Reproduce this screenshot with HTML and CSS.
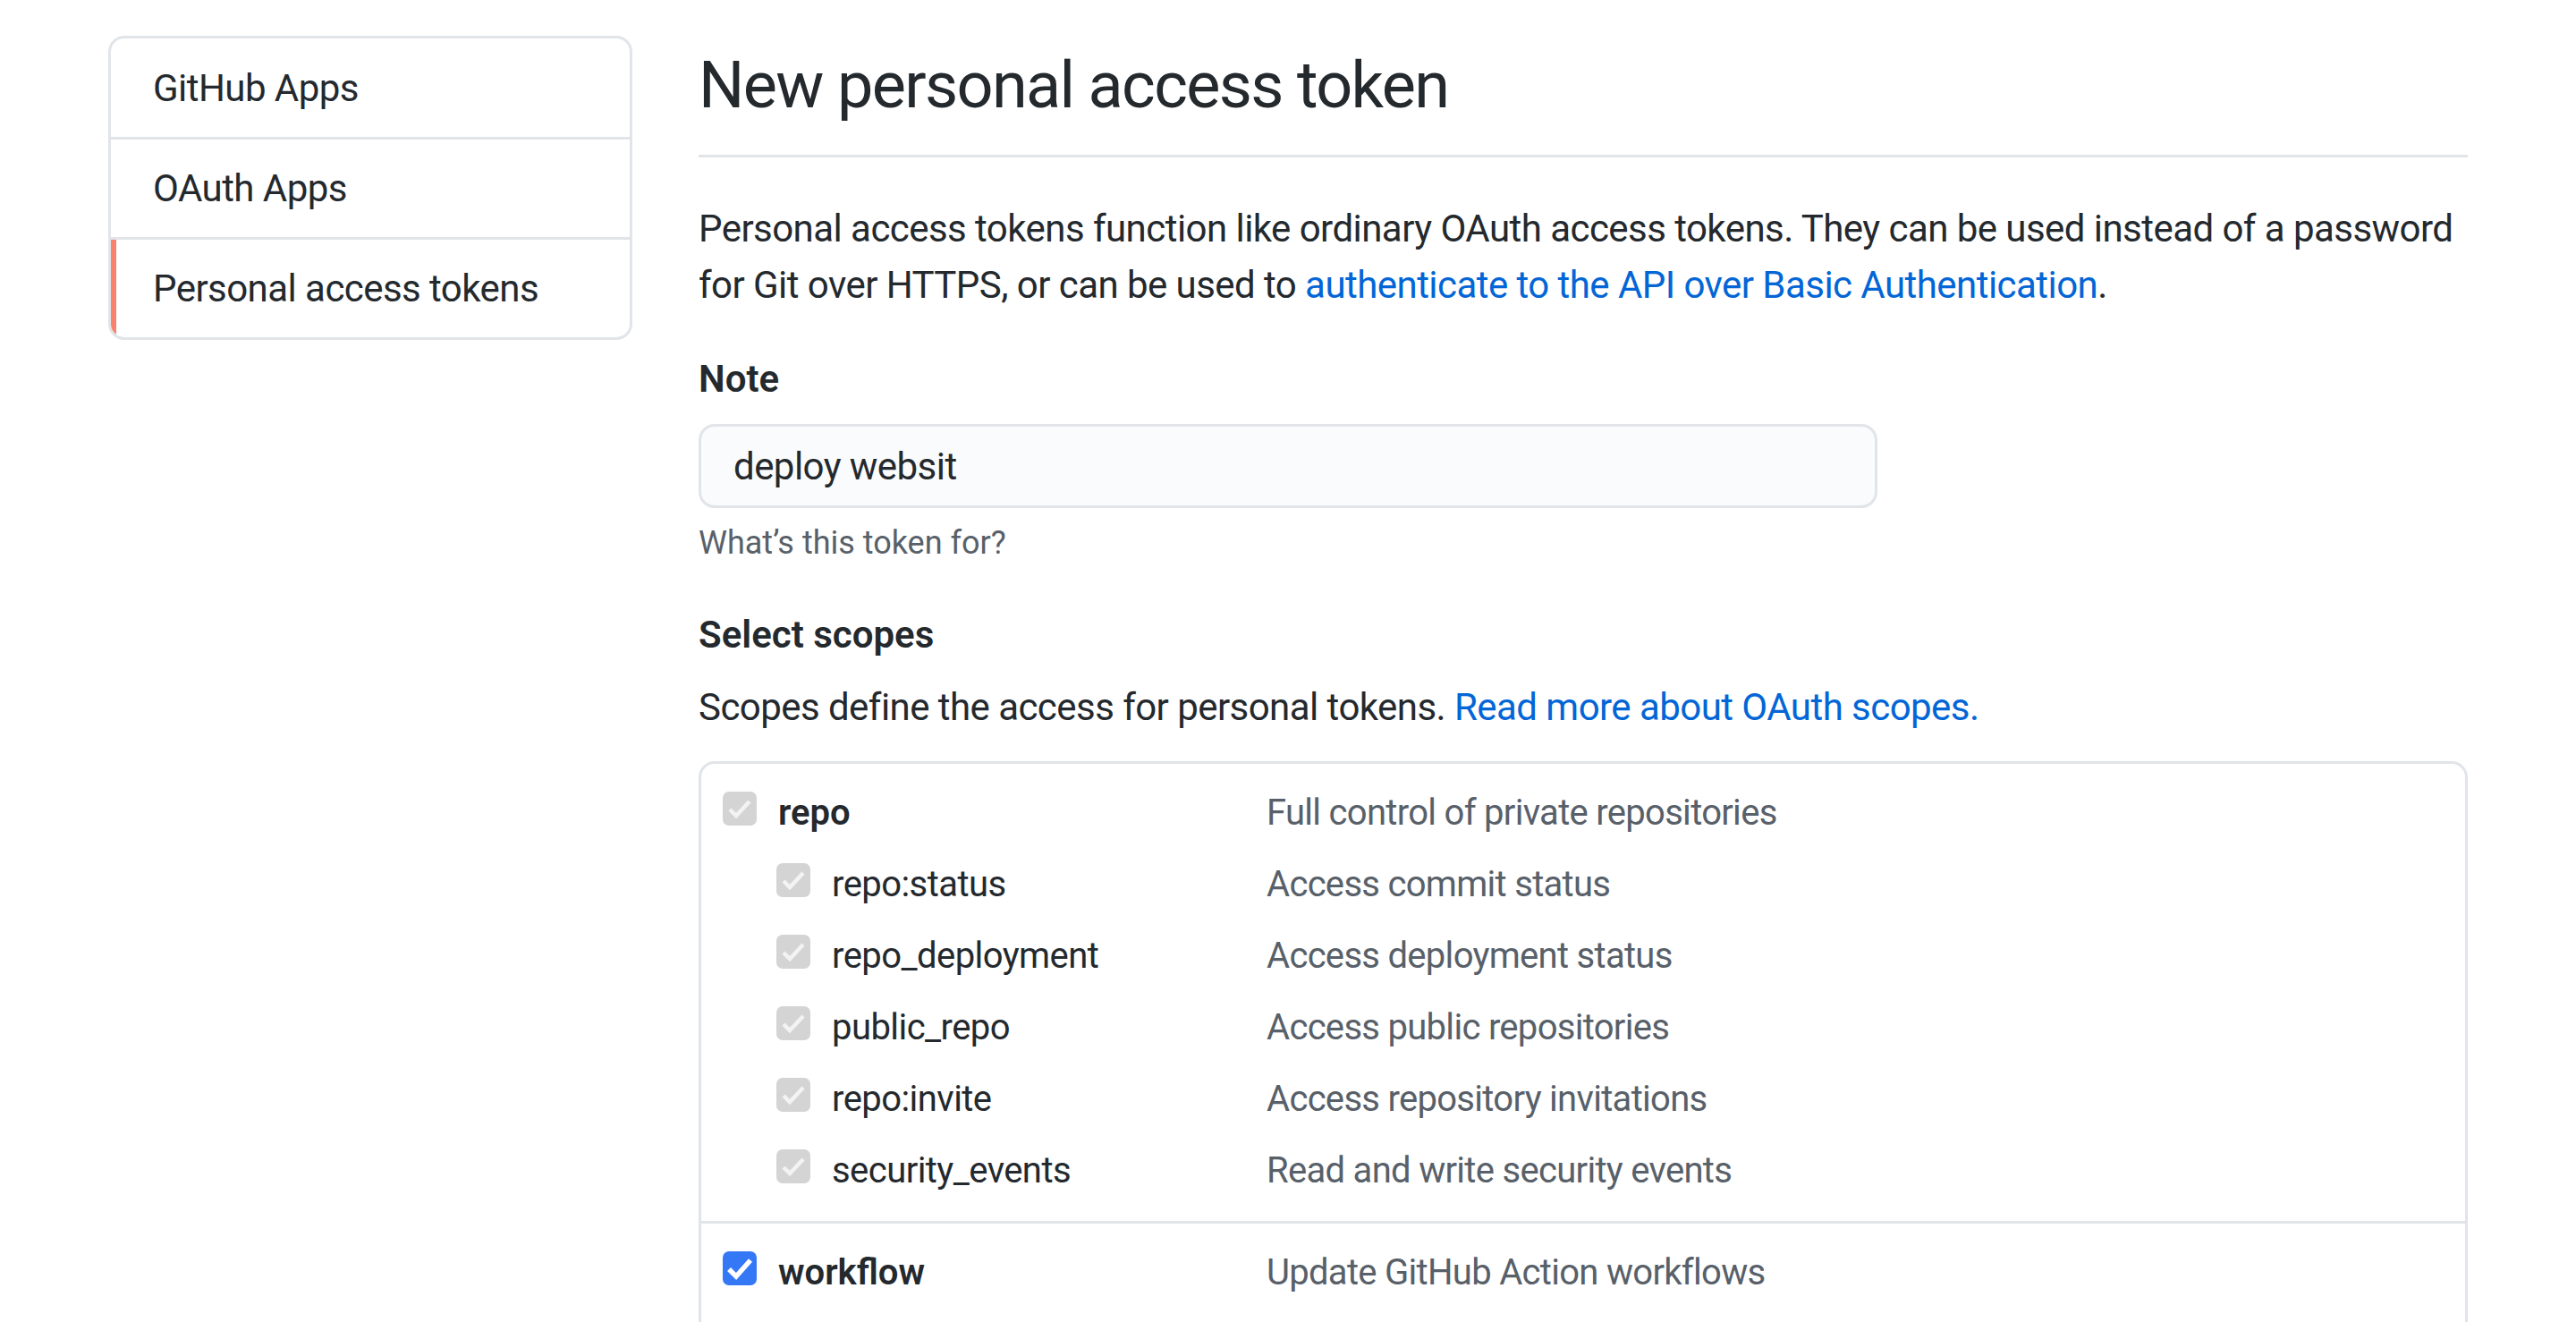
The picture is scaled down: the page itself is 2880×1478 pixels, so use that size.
FILE: index.html
```html
<!DOCTYPE html>
<html lang="en">
<head>
<meta charset="utf-8">
<title>New personal access token</title>
<link rel="stylesheet" href="styles.css">
</head>
<body>
<div class="layout">
  <nav class="menu">
    <a class="menu-item">GitHub Apps</a>
    <a class="menu-item">OAuth Apps</a>
    <a class="menu-item selected">Personal access tokens</a>
  </nav>
  <main class="main">
    <div class="subhead">
      <h2 class="subhead-heading">New personal access token</h2>
    </div>
    <p class="intro">Personal access tokens function like ordinary OAuth access tokens. They can be used instead of a password<br>for Git over HTTPS, or can be used to <a class="link">authenticate to the API over Basic Authentication</a>.</p>
    <div class="form-group">
      <label class="form-label">Note</label>
      <input class="form-control" type="text" value="deploy websit">
      <p class="note">What’s this token for?</p>
    </div>
    <div class="scopes-head">
      <div class="form-label">Select scopes</div>
      <p class="scopes-desc">Scopes define the access for personal tokens. <a class="link">Read more about OAuth scopes.</a></p>
    </div>
    <div class="scopes">
      <div class="scope-group">
        <div class="scope-row">
          <div class="scope-name top"><span class="check disabled"><svg viewBox="0 0 38 38"><path d="M8 20 L15 27 L30 11"/></svg></span><span class="name strong">repo</span></div>
          <div class="scope-desc">Full control of private repositories</div>
        </div>
        <div class="scope-row">
          <div class="scope-name sub"><span class="check disabled"><svg viewBox="0 0 38 38"><path d="M8 20 L15 27 L30 11"/></svg></span><span class="name">repo:status</span></div>
          <div class="scope-desc">Access commit status</div>
        </div>
        <div class="scope-row">
          <div class="scope-name sub"><span class="check disabled"><svg viewBox="0 0 38 38"><path d="M8 20 L15 27 L30 11"/></svg></span><span class="name">repo_deployment</span></div>
          <div class="scope-desc">Access deployment status</div>
        </div>
        <div class="scope-row">
          <div class="scope-name sub"><span class="check disabled"><svg viewBox="0 0 38 38"><path d="M8 20 L15 27 L30 11"/></svg></span><span class="name">public_repo</span></div>
          <div class="scope-desc">Access public repositories</div>
        </div>
        <div class="scope-row">
          <div class="scope-name sub"><span class="check disabled"><svg viewBox="0 0 38 38"><path d="M8 20 L15 27 L30 11"/></svg></span><span class="name">repo:invite</span></div>
          <div class="scope-desc">Access repository invitations</div>
        </div>
        <div class="scope-row">
          <div class="scope-name sub"><span class="check disabled"><svg viewBox="0 0 38 38"><path d="M8 20 L15 27 L30 11"/></svg></span><span class="name">security_events</span></div>
          <div class="scope-desc">Read and write security events</div>
        </div>
      </div>
      <div class="scope-group">
        <div class="scope-row">
          <div class="scope-name top"><span class="check checked"><svg viewBox="0 0 38 38"><path d="M7 20 L15 28 L31 10"/></svg></span><span class="name strong">workflow</span></div>
          <div class="scope-desc">Update GitHub Action workflows</div>
        </div>
      </div>
      <div class="scope-group">
        <div class="scope-row">
          <div class="scope-name top"><span class="check"></span><span class="name strong">write:packages</span></div>
          <div class="scope-desc">Upload packages to GitHub Package Registry</div>
        </div>
      </div>
    </div>
  </main>
</div>
</body>
</html>
```
FILE: styles.css
```css
html, body {
  margin: 0;
  padding: 0;
  background: #ffffff;
}
body {
  font-family: Roboto, "Liberation Sans", sans-serif;
  font-size: 42px;
  line-height: 63px;
  color: #24292e;
  letter-spacing: -0.55px;
}
.layout {
  display: flex;
  gap: 74px;
  padding: 40px 121px 0 121px;
}
.menu {
  width: 586px;
  flex: none;
  box-sizing: border-box;
  border: 3px solid #e1e4e8;
  border-radius: 18px;
  overflow: hidden;
  align-self: flex-start;
  display: flex;
  flex-direction: column;
}
.menu-item {
  display: flex;
  align-items: center;
  height: 109px;
  padding-left: 47px;
  border-top: 3px solid #e1e4e8;
  color: #24292e;
}
.menu-item:first-child {
  border-top: 0;
  height: 110px;
}
.menu-item.selected {
  box-shadow: inset 6px 0 0 #f9826c;
}
.main {
  flex: 1;
  min-width: 0;
  padding-top: 3px;
}
.subhead {
  padding-bottom: 24px;
  border-bottom: 3px solid #e1e4e8;
  margin-bottom: 48px;
}
.subhead-heading {
  margin: 0;
  font-size: 72px;
  line-height: 106px;
  font-weight: 400;
  letter-spacing: -1.65px;
}
.intro {
  margin: 0 0 42px 0;
}
.link {
  color: #0366d6;
  text-decoration: none;
}
.form-group {
  display: flex;
  flex-direction: column;
  align-items: flex-start;
}
.form-label {
  display: block;
  font-weight: 600;
  letter-spacing: 0;
  margin-bottom: 19px;
}
.form-control {
  box-sizing: border-box;
  width: 1318px;
  height: 94px;
  padding: 0 36px;
  border: 3px solid #e1e4e8;
  border-radius: 18px;
  background: #fafbfc;
  font-family: Roboto, "Liberation Sans", sans-serif;
  font-size: 42px;
  letter-spacing: -0.55px;
  color: #24292e;
  outline: none;
}
.note {
  margin: 12px 0 0 0;
  font-size: 36px;
  line-height: 54px;
  color: #586069;
  letter-spacing: 0;
}
.scopes-head {
  margin-top: 44px;
}
.scopes-head .form-label {
  margin-bottom: 18px;
}
.scopes-desc {
  margin: 0;
}
.scopes {
  margin-top: 29px;
  border: 3px solid #e1e4e8;
  border-radius: 18px;
  font-size: 40px;
}
.scope-group {
  padding: 14px 0 17px 0;
  border-top: 3px solid #e1e4e8;
}
.scope-group:first-child {
  border-top: 0;
}
.scope-row {
  display: flex;
  align-items: center;
  height: 80px;
}
.scope-name {
  width: 632px;
  flex: none;
  box-sizing: border-box;
  display: flex;
  align-items: center;
}
.scope-name.top {
  padding-left: 24px;
}
.scope-name.sub {
  padding-left: 84px;
}
.check {
  width: 38px;
  height: 38px;
  box-sizing: border-box;
  border-radius: 7px;
  flex: none;
  margin-right: 24px;
  margin-bottom: 8px;
  display: flex;
  border: 2px solid #b8b8b8;
  background: #ffffff;
}
.check svg {
  width: 38px;
  height: 38px;
  margin: -2px;
  flex: none;
}
.check svg path {
  fill: none;
  stroke-linecap: butt;
  stroke-linejoin: miter;
}
.check.disabled {
  border: 0;
  background: #d4d4d4;
}
.check.disabled svg {
  margin: 0;
}
.check.disabled path {
  stroke: #f3f3f3;
  stroke-width: 4.5;
}
.check.checked {
  border: 0;
  background: #3478f6;
}
.check.checked svg {
  margin: 0;
}
.check.checked path {
  stroke: #ffffff;
  stroke-width: 5.5;
}
.name.strong {
  font-weight: 600;
  letter-spacing: 0;
}
.scope-desc {
  color: #586069;
  letter-spacing: -0.7px;
}
```
